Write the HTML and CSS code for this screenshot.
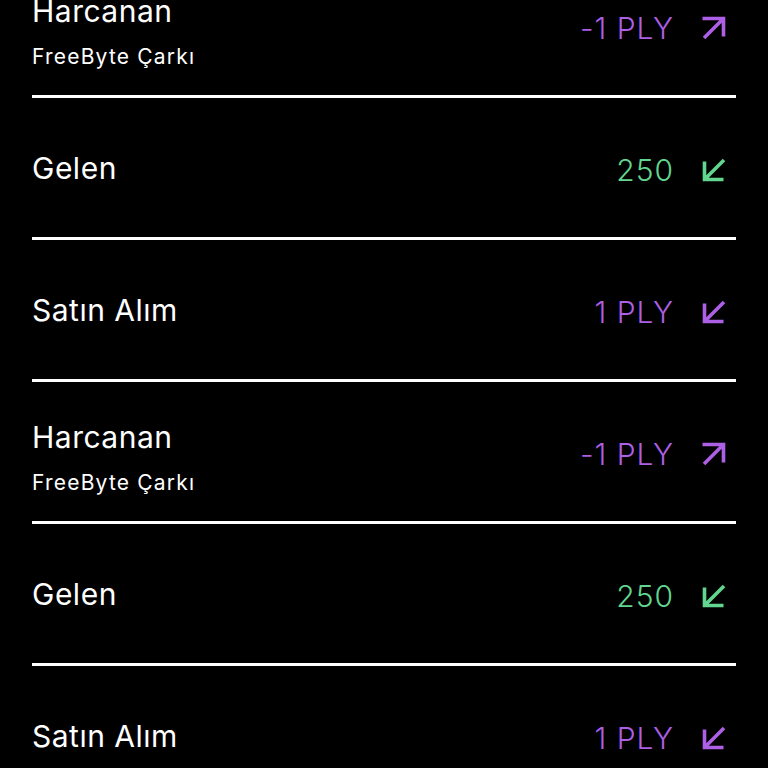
FILE: index.html
```html
<!DOCTYPE html>
<html lang="tr">
  <head>
    <meta charset="UTF-8" />
    <meta name="viewport" content="width=device-width, initial-scale=1.0" />
    <title>İşlemler</title>
    <link rel="stylesheet" href="styles.css">
  </head>

  <body>
    <ul class="tx-list">
      <li class="tx">
        <div class="tx-info two-line">
          <div class="tx-title">Harcanan</div>
          <div class="tx-sub">FreeByte Çarkı</div>
        </div>
        <div class="tx-amount purple">
          <span>-1 PLY</span>
          <svg class="arrow" viewBox="0 0 28 28"><path d="M2.5 4.5 H23.5 V22.5 M22.5 5.5 L4 24" /></svg>
        </div>
      </li>
      <li class="tx">
        <div class="tx-info">
          <div class="tx-title">Gelen</div>
        </div>
        <div class="tx-amount green">
          <span>250</span>
          <svg class="arrow" viewBox="0 0 28 28"><path d="M4.5 5.5 V23.5 H23.5 M5.5 22.5 L24 4" /></svg>
        </div>
      </li>
      <li class="tx">
        <div class="tx-info">
          <div class="tx-title">Satın Alım</div>
        </div>
        <div class="tx-amount purple">
          <span>1 PLY</span>
          <svg class="arrow" viewBox="0 0 28 28"><path d="M4.5 5.5 V23.5 H23.5 M5.5 22.5 L24 4" /></svg>
        </div>
      </li>
      <li class="tx">
        <div class="tx-info two-line">
          <div class="tx-title">Harcanan</div>
          <div class="tx-sub">FreeByte Çarkı</div>
        </div>
        <div class="tx-amount purple">
          <span>-1 PLY</span>
          <svg class="arrow" viewBox="0 0 28 28"><path d="M2.5 4.5 H23.5 V22.5 M22.5 5.5 L4 24" /></svg>
        </div>
      </li>
      <li class="tx">
        <div class="tx-info">
          <div class="tx-title">Gelen</div>
        </div>
        <div class="tx-amount green">
          <span>250</span>
          <svg class="arrow" viewBox="0 0 28 28"><path d="M4.5 5.5 V23.5 H23.5 M5.5 22.5 L24 4" /></svg>
        </div>
      </li>
      <li class="tx">
        <div class="tx-info">
          <div class="tx-title">Satın Alım</div>
        </div>
        <div class="tx-amount purple">
          <span>1 PLY</span>
          <svg class="arrow" viewBox="0 0 28 28"><path d="M4.5 5.5 V23.5 H23.5 M5.5 22.5 L24 4" /></svg>
        </div>
      </li>
    </ul>
  </body>
</html>
```

FILE: styles.css
```css
body {
  margin: 0;
  background-color: #000;
  color: #fff;
  font-family: Inter, "Noto Sans", sans-serif;
  overflow: hidden;
}

.tx-list {
  list-style-type: none;
  margin: -44px 0 0;
  padding: 0 32px;
}

.tx {
  height: 139px;
  border-bottom: 3px solid #fff;
  display: flex;
  align-items: center;
  justify-content: space-between;
  padding-right: 8px;
}

.tx-title {
  font-size: 30px;
  line-height: 36px;
  letter-spacing: 0.5px;
}

.two-line {
  padding-top: 12px;
}

.tx-sub {
  font-size: 21px;
  line-height: 28px;
  letter-spacing: 1.2px;
  margin-top: 14px;
}

/* Amount + direction arrow */
.tx-amount {
  display: flex;
  align-items: center;
  gap: 26px;
  margin-top: 4px;
  font-size: 30px;
  font-weight: 300;
  line-height: 36px;
  letter-spacing: 1px;
}

.arrow {
  width: 28px;
  height: 28px;
  fill: none;
  stroke: currentColor;
  stroke-width: 3.6;
}

.purple {
  color: #ad5fe6;
}

.green {
  color: #62d68f;
}
```
